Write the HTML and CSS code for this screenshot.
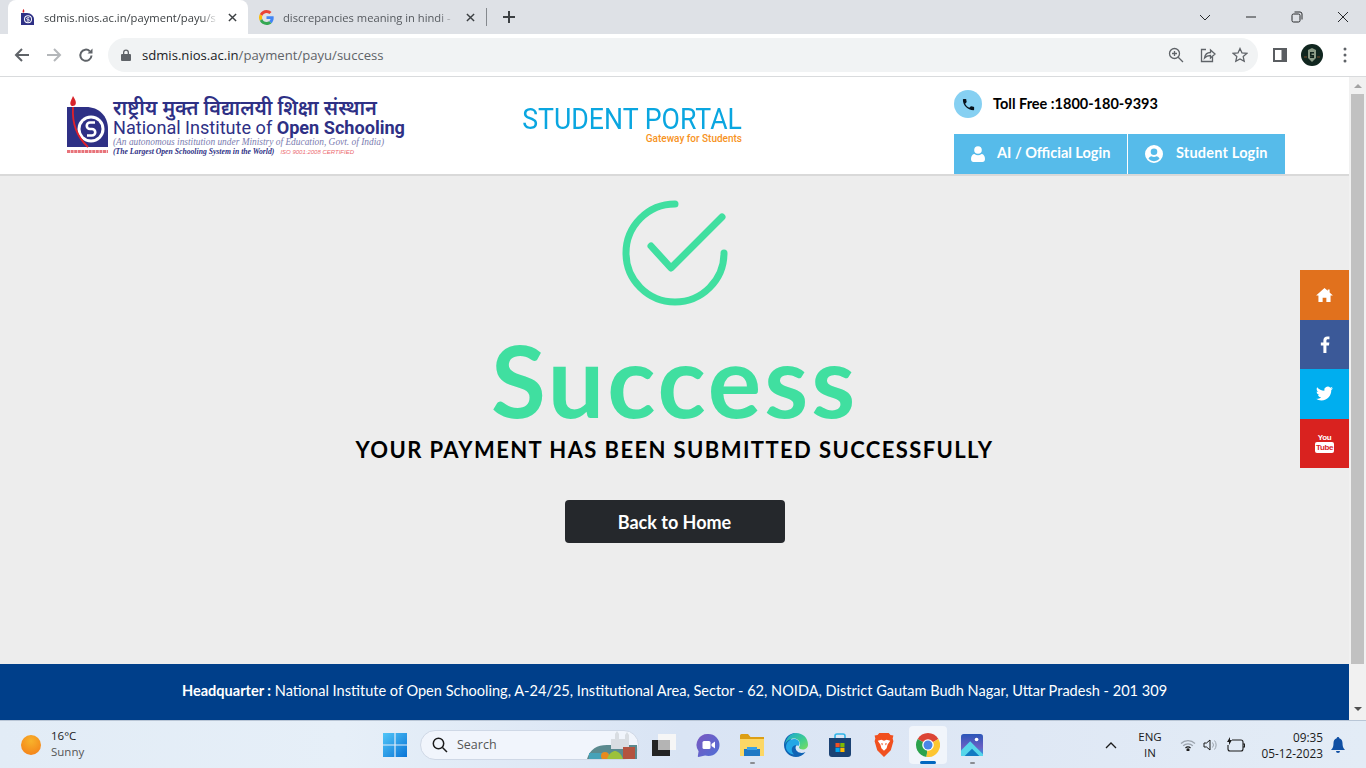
FILE: index.html
```html
<!DOCTYPE html>
<html lang="en">
  <head>
    <meta charset="UTF-8" />
    <meta name="viewport" content="width=device-width, initial-scale=1.0" />
    <title>Payment success</title>
    <link rel="stylesheet" href="styles.css">
  </head>
  <body>
    <!-- browser tabs -->
    <div class="tabstrip">
      <div class="tab tab-active">
        <svg class="favicon" viewBox="0 0 13 16"><path fill="#d8232a" d="M2.500 0c.8 1 1 2 .6 3.500H1.800C1.300 2.500 1.800 1 2.500 0z"/><path fill="#2e3085" d="M0 4h6c4 0 7 3 7 6.500V16H0z"/><circle cx="7" cy="10.300" r="4" fill="#fff"/><circle cx="7" cy="10.300" r="3" fill="#2e3085"/><path fill="none" stroke="#fff" stroke-width="1" d="M8.300 8.800H6.500a.8.8 0 0 0 0 1.600h1a.8.8 0 0 1 0 1.600H5.700"/></svg>
        <span class="tab-title">sdmis.nios.ac.in/payment/payu/s</span>
        <svg class="tab-close" viewBox="0 0 10 10"><path d="M1 1l8 8M9 1L1 9"/></svg>
      </div>
      <div class="tab">
        <svg class="favicon favicon-g" viewBox="0 0 48 48"><path fill="#EA4335" d="M24 9.500c3.540 0 6.710 1.220 9.210 3.600l6.850-6.850C35.900 2.380 30.470 0 24 0 14.620 0 6.510 5.380 2.560 13.220l7.980 6.190C12.430 13.720 17.740 9.500 24 9.500z"/><path fill="#4285F4" d="M46.980 24.550c0-1.570-.15-3.090-.38-4.550H24v9.020h12.940c-.58 2.960-2.260 5.480-4.780 7.180l7.730 6c4.510-4.180 7.090-10.360 7.090-17.650z"/><path fill="#FBBC05" d="M10.530 28.590c-.48-1.450-.76-2.990-.76-4.590s.27-3.140.76-4.590l-7.980-6.190C.92 16.460 0 20.120 0 24c0 3.880.92 7.540 2.560 10.780l7.970-6.190z"/><path fill="#34A853" d="M24 48c6.480 0 11.930-2.130 15.890-5.810l-7.730-6c-2.150 1.450-4.920 2.300-8.160 2.300-6.260 0-11.570-4.220-13.470-9.910l-7.980 6.190C6.510 42.620 14.620 48 24 48z"/></svg>
        <span class="tab-title tab-title-dim">discrepancies meaning in hindi -</span>
        <svg class="tab-close" viewBox="0 0 10 10"><path d="M1 1l8 8M9 1L1 9"/></svg>
      </div>
      <span class="tab-sep"></span>
      <svg class="new-tab" viewBox="0 0 12 12"><path d="M6 0v12M0 6h12"/></svg>
      <div class="window-btns">
        <svg viewBox="0 0 12 12"><path d="M1 4l5 5 5-5"/></svg>
        <svg viewBox="0 0 12 12"><path d="M1 6h10"/></svg>
        <svg viewBox="0 0 12 12"><rect x="1" y="3" width="8" height="8" rx="1.500"/><path d="M3.500 1h5.500a2 2 0 0 1 2 2v5.500"/></svg>
        <svg viewBox="0 0 12 12"><path d="M1 1l10 10M11 1L1 11"/></svg>
      </div>
    </div>

    <!-- address bar -->
    <div class="toolbar">
      <svg class="nav-icon" viewBox="0 0 16 16"><path d="M15 8H2M8 2L2 8l6 6"/></svg>
      <svg class="nav-icon nav-off" viewBox="0 0 16 16"><path d="M1 8h13M8 2l6 6-6 6"/></svg>
      <svg class="nav-icon" viewBox="0 0 16 16"><path d="M13.500 8.500a5.600 5.600 0 1 1-1.700-4.300"/><path class="solid" d="M14.500 1.500v5h-5z"/></svg>
      <div class="omnibox">
        <svg class="lock" viewBox="0 0 10 12"><path d="M2 5V3.500a3 3 0 0 1 6 0V5h1a1 1 0 0 1 1 1v5a1 1 0 0 1-1 1H1a1 1 0 0 1-1-1V6a1 1 0 0 1 1-1zm1.300 0h3.400V3.500a1.700 1.700 0 0 0-3.400 0z"/></svg>
        <span class="url"><b>sdmis.nios.ac.in</b>/payment/payu/success</span>
        <div class="omni-actions">
          <svg viewBox="0 0 16 16"><circle cx="6.500" cy="6.500" r="5"/><path d="M10.200 10.200L15 15M6.500 4v5M4 6.500h5"/></svg>
          <svg viewBox="0 0 16 16"><path d="M6 2.500H1.500v12h11V10"/><path d="M4.500 11c.5-3.500 3-5.500 6-5.500V3l4.500 4-4.500 4V8.500c-2.500 0-4.500.8-6 2.500z"/></svg>
          <svg viewBox="0 0 16 16"><path d="M8 1.500l2 4.400 4.800.5-3.600 3.200 1 4.700L8 11.900l-4.200 2.400 1-4.700L1.200 6.400 6 5.900z"/></svg>
        </div>
      </div>
      <svg class="side-panel" viewBox="0 0 14 14"><path d="M0 0h14v14H0zM2 2v10h6.500V2z"/></svg>
      <svg class="avatar" viewBox="0 0 22 22"><circle cx="11" cy="11" r="11" fill="#10261f"/><path d="M7 6l4-2 4 2v8l-4 4-4-4z" fill="#8a9a86"/><path d="M9 8h4v1.500h-2.500V11H13v3H9v-1.500h2.500V12.300H9z" fill="#11241d"/><path d="M3 13h3M16 13h3" stroke="#7a4a2a" stroke-width="1"/></svg>
      <svg class="kebab" viewBox="0 0 4 16"><circle cx="2" cy="2" r="1.500"/><circle cx="2" cy="8" r="1.500"/><circle cx="2" cy="14" r="1.500"/></svg>
    </div>

    <div class="viewport">
      <div class="page">
        <header class="site-header">
          <div class="logo">
            <svg class="logo-mark" viewBox="0 0 41 59">
              <path fill="#d8232a" d="M6 0c1.500 3 3.500 5 2.700 8-.5 2-4.200 3-5.200.5C2.700 6 5 3 6 0z"/>
              <path fill="#2e3085" d="M0 11h19c13 0 22 9 22 22v18H0z"/>
              <circle cx="24" cy="33" r="13.500" fill="#fff"/>
              <circle cx="24" cy="33" r="10.500" fill="#2e3085"/>
              <path fill="none" stroke="#fff" stroke-width="2.600" d="M28 26.500h-5a3 3 0 0 0 0 6.500h2a3 3 0 0 1 0 6.500h-5"/>
              <path fill="none" stroke="#e0202a" stroke-width="1.800" d="M6 11c-1 15 3 29 15 40"/>
              <path fill="none" stroke="#e8737a" stroke-width="3" stroke-dasharray="3 .6" d="M0 55.500h41"/>
            </svg>
            <div class="logo-text">
              <div class="logo-hi">राष्ट्रीय मुक्त विद्यालयी शिक्षा संस्थान</div>
              <div class="logo-en">National Institute of <b>Open Schooling</b></div>
              <div class="logo-sub">(An autonomous institution under Ministry of Education, Govt. of India)</div>
              <div class="logo-tag"><b>(The Largest Open Schooling System in the World)</b><span class="logo-iso">ISO 9001:2008 CERTIFIED</span></div>
            </div>
          </div>
          <div class="portal">
            <div class="portal-title">STUDENT PORTAL</div>
            <div class="portal-sub">Gateway for Students</div>
          </div>
          <div class="header-right">
            <div class="toll">
              <span class="toll-icon"><svg viewBox="0 0 24 24"><path d="M6.620 10.790c1.440 2.830 3.760 5.140 6.590 6.590l2.200-2.200c.27-.27.670-.36 1.020-.24 1.120.37 2.330.57 3.570.57.550 0 1 .45 1 1V20c0 .55-.45 1-1 1-9.390 0-17-7.610-17-17 0-.55.45-1 1-1h3.500c.55 0 1 .45 1 1 0 1.250.2 2.450.57 3.570.11.35.03.74-.25 1.020l-2.200 2.200z"/></svg></span>
              <span class="toll-text">Toll Free :1800-180-9393</span>
            </div>
            <div class="login-btns">
              <a class="login login-ai">
                <svg class="login-user" viewBox="0 0 14 16"><circle cx="7" cy="4" r="3.800"/><path d="M0 13c0-3 1.500-5 3.500-5 1 .8 2.200 1.200 3.500 1.200S9.500 8.800 10.500 8c2 0 3.500 2 3.500 5 0 2-1 3-2.500 3h-9C1 16 0 15 0 13z"/></svg>
                AI / Official Login
              </a>
              <a class="login login-student">
                <svg class="login-circle" viewBox="0 0 18 18"><path fill-rule="evenodd" d="M9 0a9 9 0 1 1 0 18A9 9 0 0 1 9 0zm0 3.500a3.300 3.300 0 1 0 0 6.600 3.300 3.300 0 0 0 0-6.600zM3.500 13.800A7 7 0 0 0 9 16.200a7 7 0 0 0 5.500-2.400c-.5-1.500-1.700-2.500-3-2.500-.8.400-1.600.6-2.500.6s-1.700-.2-2.500-.6c-1.300 0-2.500 1-3 2.500z"/></svg>
                Student Login
              </a>
            </div>
          </div>
        </header>

        <main class="success">
          <svg class="check" viewBox="0 0 106 106"><path d="M53 4A49 49 0 1 0 102 53"/><path d="M29 46l20 22 51-51"/></svg>
          <h1 class="success-title">Success</h1>
          <p class="success-msg">YOUR PAYMENT HAS BEEN SUBMITTED SUCCESSFULLY</p>
          <a class="home-btn">Back to Home</a>
        </main>

        <footer class="site-footer"><b>Headquarter :</b> National Institute of Open Schooling, A-24/25, Institutional Area, Sector - 62, NOIDA, District Gautam Budh Nagar, Uttar Pradesh - 201 309</footer>

        <!-- floating social bar -->
        <div class="social">
          <a class="social-home"><svg viewBox="0 0 18 15"><path d="M9 0l3.500 3V1.500h2v3.300L18 8h-2.500v7H11v-4.500H7V15H2.500V8H0z"/></svg></a>
          <a class="social-fb"><svg viewBox="0 0 10 18"><path d="M6.500 18V10h2.700l.4-3.200H6.500V4.900c0-.9.300-1.500 1.600-1.500h1.600V.6C9.400.5 8.500.4 7.400.4 5 .4 3.300 1.900 3.300 4.500v2.300H.6V10h2.700v8z"/></svg></a>
          <a class="social-tw"><svg viewBox="0 0 24 24"><path d="M23.953 4.570a10 10 0 01-2.825.775 4.958 4.958 0 002.163-2.723c-.951.555-2.005.959-3.127 1.184a4.920 4.920 0 00-8.384 4.482C7.690 8.095 4.067 6.130 1.640 3.162a4.822 4.822 0 00-.666 2.475c0 1.710.870 3.213 2.188 4.096a4.904 4.904 0 01-2.228-.616v.060a4.923 4.923 0 003.946 4.827 4.996 4.996 0 01-2.212.085 4.936 4.936 0 004.604 3.417 9.867 9.867 0 01-6.102 2.105c-.39 0-.779-.023-1.170-.067a13.995 13.995 0 007.557 2.209c9.053 0 13.998-7.496 13.998-13.985 0-.21 0-.42-.015-.63A9.935 9.935 0 0024 4.590z"/></svg></a>
          <a class="social-yt"><span class="yt-you">You</span><span class="yt-tube">Tube</span></a>
        </div>
      </div>

      <div class="scrollbar">
        <span class="arrow-up"></span>
        <span class="thumb"></span>
        <span class="arrow-down"></span>
      </div>
    </div>

    <!-- windows taskbar -->
    <div class="taskbar">
      <div class="weather">
        <span class="sun"></span>
        <div class="weather-text">
          <div>16°C</div>
          <div class="weather-dim">Sunny</div>
        </div>
      </div>
      <div class="task-cell">
        <svg class="task-icon" viewBox="0 0 24 24"><defs><linearGradient id="win" x1="0" y1="0" x2="1" y2="1"><stop offset="0" stop-color="#52c6f8"/><stop offset="1" stop-color="#0a74d6"/></linearGradient></defs><path fill="url(#win)" d="M0 0h11.400v11.400H0zM12.600 0H24v11.400H12.600zM0 12.600h11.400V24H0zM12.600 12.600H24V24H12.600z"/></svg>
      </div>
      <div class="searchbox">
        <svg class="search-icon" viewBox="0 0 16 16"><circle cx="6.500" cy="6.500" r="5.200"/><path d="M10.500 10.500L15 15"/></svg>
        <span>Search</span>
        <svg class="search-art" viewBox="0 0 50 28"><path fill="#5b8a8f" d="M0 28C3 18 10 14 20 14l30 0v14z"/><path fill="#46a2b8" d="M2 22h20v6H2z"/><path fill="#d9dde2" d="M24 8h4V3l2-3 2 3v5h6V4l2-3 2 3v14H24z"/><path fill="#b4533f" d="M36 16h12v12H36z"/><circle cx="18" cy="25" r="4" fill="#e88a1f"/><path fill="#9cc13b" d="M20 28c2-6 6-8 8-8s6 2 8 8z"/></svg>
      </div>
      <div class="task-cell task-view">
        <svg class="task-icon" viewBox="0 0 24 22"><rect x="6" width="18" height="16" fill="#f6f6f6"/><rect y="6" width="18" height="16" fill="#242424"/><rect x="6" y="6" width="12" height="10" fill="#b4b4b4"/></svg>
      </div>
      <div class="task-cell">
        <svg class="task-icon" viewBox="0 0 24 24"><defs><linearGradient id="teams" x1="0" y1="0" x2="1" y2="1"><stop offset="0" stop-color="#7a58c0"/><stop offset="1" stop-color="#4f6fd6"/></linearGradient></defs><path fill="url(#teams)" d="M12.500 1a11 11 0 0 1 0 22c-1.200 0-2.300-.2-3.400-.5L2.500 24c-.5 0-.8-.4-.7-.8l.8-4.900A11 11 0 0 1 12.500 1z"/><rect x="6.500" y="8" width="8" height="8" rx="1.500" fill="#fff"/><path fill="#fff" d="M15.500 11l3.500-2.500v7L15.500 13z"/></svg>
      </div>
      <div class="task-cell task-open">
        <svg class="task-icon" viewBox="0 0 24 22"><path fill="#dd9f15" d="M0 1.500A1.500 1.500 0 0 1 1.500 0H8l2.500 3H24v5H0z"/><path fill="#fcd765" d="M0 5h24v17H0z"/><path fill="#1e78c4" d="M4 15h16v7H4z"/><path fill="#37a0e6" d="M7 13h10v3H7z"/></svg>
      </div>
      <div class="task-cell">
        <svg class="task-icon" viewBox="0 0 24 24"><defs><linearGradient id="edge" x1="0" y1="0" x2="1" y2="1"><stop offset="0" stop-color="#1aa4d8"/><stop offset=".6" stop-color="#41cf8e"/><stop offset="1" stop-color="#7fdc5e"/></linearGradient></defs><path fill="#0f63b4" d="M12 0C5 0 0 5.500 0 12c0 6.600 5.400 12 12 12 3.500 0 7-1.500 9.500-5-3 1.500-6 1.200-8-.5-2.500-2.200-2.500-5-.5-6.500H6C6 6 9 1 12 0z"/><path fill="#24a7e6" d="M2 14c0-5 4-8 8-8 3 0 5.500 2 5.500 4.500 0 1-.5 1.500-1 2.500-1.500-1-4-1-5.500.5C7 15.500 7.500 19 10 21.500 5.500 21 2 18 2 14z"/><path fill="url(#edge)" d="M12 0c7 0 12 5 12 11.500 0 3.500-2.500 5-5 5-2 0-4-1-4-2 0-1 1-1.500 1-3.500 0-3-2.500-5.500-6-5.500C6 5.500 2.500 8 1 11.500 2 5 6.500 0 12 0z"/></svg>
      </div>
      <div class="task-cell">
        <svg class="task-icon" viewBox="0 0 24 24"><path fill="none" stroke="#31b5e8" stroke-width="1.600" d="M7 7V3a2 2 0 0 1 2-2h6a2 2 0 0 1 2 2v4"/><path fill="#1b4273" d="M1 5h22v16a3 3 0 0 1-3 3H4a3 3 0 0 1-3-3z"/><path fill="#f25022" d="M7.500 10h4.200v4.200H7.500z"/><path fill="#7fba00" d="M12.300 10h4.200v4.200h-4.200z"/><path fill="#00a4ef" d="M7.500 14.800h4.200V19H7.500z"/><path fill="#ffb900" d="M12.300 14.800h4.200V19h-4.200z"/></svg>
      </div>
      <div class="task-cell">
        <svg class="task-icon" viewBox="0 0 20 23"><path fill="#f1501f" d="M5.500 0h9l1.700 2 2.800.4-.7 2.800.7 2.800-2.500 8.500L10 23l-6.500-6.500L1 8l.7-2.800L1 2.400 3.800 2z"/><path fill="#fff" d="M4 7.500l3.500-1L10 7.500l2.500-1 3.500 1-2.500 3.500-1 3.500L10 17l-2.500-2.500-1-3.500z"/><path fill="#f1501f" d="M7.300 9.500l1.800.8-1 1.700zM12.700 9.500l-1.800.8 1 1.700z"/></svg>
      </div>
      <div class="task-cell task-active">
        <svg class="task-icon" viewBox="0 0 24 24"><path fill="#dc4535" d="M12 12L22.390 6A12 12 0 0 0 1.610 6z"/><path fill="#2ba24c" d="M12 12L1.610 6A12 12 0 0 0 10.500 23.900z"/><path fill="#fdc632" d="M12 12L10.500 23.900A12 12 0 0 0 22.390 6z"/><circle cx="12" cy="12" r="5.800" fill="#fff"/><circle cx="12" cy="12" r="4.500" fill="#4a86e8"/></svg>
      </div>
      <div class="task-cell task-open">
        <svg class="task-icon task-photos" viewBox="0 0 24 24"><defs><linearGradient id="ph" x1="0" y1="0" x2="0" y2="1"><stop offset="0" stop-color="#2b56b8"/><stop offset=".6" stop-color="#6a5fc4"/><stop offset="1" stop-color="#2a9fe6"/></linearGradient></defs><rect width="24" height="24" rx="3" fill="url(#ph)"/><circle cx="17" cy="6" r="2" fill="#fff"/><path fill="#56d6ea" d="M0 24V18L10 8l14 14v2z"/><path fill="#137ac2" d="M4 24l8-8 8 8z"/></svg>
      </div>
      <div class="tray">
        <svg class="tray-chevron" viewBox="0 0 12 8"><path d="M1 7l5-5 5 5"/></svg>
        <div class="lang"><div>ENG</div><div>IN</div></div>
        <svg class="tray-wifi" viewBox="0 0 16 12"><path class="faint" d="M1 4.500a10 10 0 0 1 14 0M3.200 6.800a7 7 0 0 1 9.600 0"/><path d="M5.500 9a3.500 3.500 0 0 1 5 0"/><circle cx="8" cy="10.800" r="1"/></svg>
        <svg class="tray-vol" viewBox="0 0 16 14"><path d="M1 5h2.500L7 2v10L3.500 9H1z"/><path class="faint" d="M9.500 4.500a4 4 0 0 1 0 5M11.500 2.500a7 7 0 0 1 0 9"/></svg>
        <svg class="tray-batt" viewBox="0 0 20 16"><path d="M7 3h9a2 2 0 0 1 2 2v7a2 2 0 0 1-2 2H5a2 2 0 0 1-2-2V8M18 7h1.500v3H18"/><path class="solid" d="M5 0L2 5h2v3l3-5H5z"/></svg>
        <div class="clock"><div>09:35</div><div>05-12-2023</div></div>
        <svg class="tray-bell" viewBox="0 0 14 16"><path d="M7 0a1.300 1.300 0 0 1 1.300 1.300C10.500 2 11.500 3.800 11.500 6c0 3 .5 5 2.500 7H0c2-2 2.500-4 2.500-7 0-2.200 1-4 3.200-4.700A1.300 1.300 0 0 1 7 0zM5 14h4a2 2 0 0 1-4 0z"/></svg>
      </div>
    </div>
  </body>
</html>
```

FILE: styles.css
```css
/* general */
* {
  box-sizing: border-box;
}

html,
body {
  margin: 0;
  height: 768px;
  overflow: hidden;
}

body {
  display: flex;
  flex-direction: column;
  font-family: "Lato", "Noto Sans", sans-serif;
  color: #000;
  background-color: #ededed;
}

/* tabs */
.tabstrip {
  display: flex;
  align-items: center;
  height: 34px;
  padding-left: 8px;
  background-color: #dee1e6;
  font-family: "Open Sans", sans-serif;
  font-size: 11.200px;
  color: #3c4043;
}

.tab {
  display: flex;
  align-items: center;
  width: 238px;
  height: 34px;
  padding: 0 11px 0 13px;
}

.tab-active {
  width: 240px;
  background-color: #fff;
  border-radius: 8px 8px 0 0;
}

.favicon {
  flex: none;
  width: 13px;
  height: 16px;
  margin-right: 10px;
}

.favicon-g {
  width: 15px;
  height: 15px;
  margin-left: -2px;
  margin-right: 9px;
}

.tab-title {
  flex: 1;
  overflow: hidden;
  white-space: nowrap;
  -webkit-mask-image: linear-gradient(to right, #000 90%, transparent 100%);
  mask-image: linear-gradient(to right, #000 90%, transparent 100%);
}

.tab-title-dim {
  color: #55595e;
}

.tab-close {
  flex: none;
  width: 9px;
  height: 9px;
  margin-left: 10px;
  fill: none;
  stroke: #3c4043;
  stroke-width: 1.600;
}

.tab-sep {
  width: 1px;
  height: 18px;
  background-color: #85898e;
}

.new-tab {
  width: 12px;
  height: 12px;
  margin-left: 16px;
  fill: none;
  stroke: #3c4043;
  stroke-width: 2;
}

.window-btns {
  display: flex;
  gap: 34px;
  margin-left: auto;
  padding-right: 17px;
}

.window-btns svg {
  width: 12px;
  height: 12px;
  fill: none;
  stroke: #26282b;
  stroke-width: 1;
}

/* address bar */
.toolbar {
  display: flex;
  align-items: center;
  height: 43px;
  padding: 0 0 1px 14px;
  background-color: #fff;
  border-bottom: 1px solid #d9dbdd;
}

.nav-icon {
  width: 16px;
  height: 16px;
  margin-right: 16px;
  fill: none;
  stroke: #5f6368;
  stroke-width: 2;
}

.nav-icon .solid {
  fill: #5f6368;
  stroke: none;
}

.nav-off {
  stroke: #b4b7ba;
}

.omnibox {
  display: flex;
  align-items: center;
  width: 1150px;
  height: 34px;
  margin-left: -2px;
  padding: 0 10px 0 13px;
  background-color: #f1f3f4;
  border-radius: 17px;
  font-family: "Open Sans", sans-serif;
  font-size: 13.100px;
  color: #5f6368;
}

.lock {
  width: 10px;
  height: 12px;
  margin-right: 11px;
  fill: #5f6368;
}

.url b {
  font-weight: 400;
  color: #202124;
}

.omni-actions {
  display: flex;
  gap: 16px;
  margin-left: auto;
}

.omni-actions svg {
  width: 16px;
  height: 16px;
  fill: none;
  stroke: #5f6368;
  stroke-width: 1.300;
}

.side-panel {
  width: 14px;
  height: 14px;
  margin-left: 15px;
  fill: #5a5d61;
  fill-rule: evenodd;
}

.avatar {
  width: 22px;
  height: 22px;
  margin-left: 14px;
}

.kebab {
  width: 4px;
  height: 16px;
  margin-left: 20px;
  fill: #5f6368;
}

/* page + scrollbar */
.viewport {
  display: flex;
  height: 643px;
}

.page {
  position: relative;
  display: flex;
  flex-direction: column;
  width: 1349px;
}

.scrollbar {
  position: relative;
  display: flex;
  flex-direction: column;
  align-items: center;
  width: 17px;
  background-color: #f1f1f1;
}

.thumb {
  width: 13px;
  height: 570px;
  margin-top: 6px;
  background-color: #c1c1c1;
}

.arrow-up,
.arrow-down {
  width: 0;
  height: 0;
  border-left: 4px solid transparent;
  border-right: 4px solid transparent;
}

.arrow-up {
  margin-top: 7px;
  border-bottom: 4px solid #a3a3a3;
}

.arrow-down {
  margin-top: 43px;
  border-top: 4px solid #505050;
}

/* site header */
.site-header {
  display: flex;
  flex: none;
  height: 99px;
  padding-left: 67px;
  background-color: #fff;
  border-bottom: 2px solid #d9d9d9;
}

.logo {
  display: flex;
  width: 338px;
  padding-top: 19px;
  color: #2e3085;
  font-family: "Roboto", sans-serif;
}

.logo-mark {
  flex: none;
  width: 41px;
  height: 59px;
  margin-right: 5px;
}

.logo-hi {
  height: 23px;
  font-family: "Noto Sans", "Noto Serif", sans-serif;
  font-size: 20px;
  line-height: 23px;
  font-weight: 600;
  white-space: nowrap;
}

.logo-en {
  height: 18px;
  font-size: 18.100px;
  line-height: 18px;
  white-space: nowrap;
}

.logo-sub {
  height: 10px;
  font-family: "Liberation Serif", serif;
  font-size: 9.400px;
  line-height: 10px;
  font-style: italic;
  color: #7b7db0;
  white-space: nowrap;
}

.logo-tag {
  height: 9px;
  font-family: "Liberation Serif", serif;
  font-size: 7.700px;
  line-height: 9px;
  font-style: italic;
  white-space: nowrap;
}

.logo-iso {
  margin-left: 6px;
  font-family: "Liberation Sans", sans-serif;
  font-size: 6px;
  color: #ec6b70;
}

.portal {
  display: flex;
  flex-direction: column;
  align-items: flex-end;
  width: 220px;
  margin-left: 117px;
  padding-top: 24px;
  font-family: "Roboto", sans-serif;
}

.portal-title {
  font-size: 30px;
  line-height: 36px;
  color: #0aa6e0;
  white-space: nowrap;
  transform: scaleX(.89);
  transform-origin: right center;
}

.portal-sub {
  margin-top: -5px;
  font-size: 10px;
  line-height: 13px;
  font-weight: 500;
  color: #f7931e;
}

.header-right {
  display: flex;
  flex-direction: column;
  width: 331px;
  margin-left: 212px;
  padding-top: 13px;
}

.toll {
  display: flex;
  align-items: center;
  gap: 11px;
  height: 28px;
  font-size: 14.500px;
  font-weight: 700;
}

.toll-text {
  padding-bottom: 2px;
}

.toll-icon {
  display: flex;
  align-items: center;
  justify-content: center;
  width: 28px;
  height: 28px;
  background-color: #86d0f2;
  border-radius: 50%;
}

.toll-icon svg {
  width: 15px;
  height: 15px;
  fill: #06101a;
}

.login-btns {
  display: flex;
  gap: 1px;
  margin-top: 16px;
}

.login {
  display: flex;
  align-items: center;
  height: 40px;
  padding-bottom: 3px;
  background-color: #56bbea;
  color: #fff;
  font-size: 14.500px;
  font-weight: 700;
}

.login svg {
  margin-top: 3px;
}

.login-ai {
  width: 173px;
  padding-left: 17px;
  gap: 12px;
}

.login-student {
  width: 157px;
  padding-left: 17px;
  gap: 13px;
  letter-spacing: .2px;
}

.login-user {
  width: 14px;
  height: 16px;
  fill: #fff;
}

.login-circle {
  width: 18px;
  height: 18px;
  fill: #fff;
}

/* success block */
.success {
  display: flex;
  flex: 1;
  flex-direction: column;
  align-items: center;
  padding-top: 24px;
  background-color: #ededed;
}

.check {
  width: 106px;
  height: 106px;
  fill: none;
  stroke: #40dfa0;
  stroke-width: 7;
  stroke-linecap: round;
  stroke-linejoin: round;
}

.success-title {
  margin: 17px 0 0;
  font-size: 100px;
  line-height: 112px;
  font-weight: 700;
  letter-spacing: 3px;
  color: #40dfa0;
}

.success-msg {
  margin: -1px 0 0;
  font-size: 22px;
  line-height: 32px;
  font-weight: 700;
  letter-spacing: 1.400px;
}

.home-btn {
  display: flex;
  align-items: center;
  justify-content: center;
  width: 220px;
  height: 43px;
  margin-top: 34px;
  background-color: #25282c;
  border-radius: 4px;
  color: #fff;
  font-size: 18px;
  font-weight: 700;
}

/* footer */
.site-footer {
  flex: none;
  height: 56px;
  background-color: #003f8a;
  color: #fff;
  font-size: 14.550px;
  line-height: 53px;
  text-align: center;
}

/* social bar */
.social {
  position: absolute;
  top: 193px;
  right: 0;
  display: flex;
  flex-direction: column;
  width: 49px;
}

.social a {
  display: flex;
  flex-direction: column;
  align-items: center;
  justify-content: center;
  height: 49.500px;
}

.social svg {
  fill: #fff;
}

.social-home {
  background-color: #e1711d;
}

.social-home svg {
  width: 17px;
  height: 14px;
}

.social-fb {
  background-color: #3b5998;
}

.social-fb svg {
  width: 10px;
  height: 17px;
}

.social-tw {
  background-color: #00aeef;
}

.social-tw svg {
  width: 17px;
  height: 17px;
}

.social-yt {
  background-color: #d9221f;
  font-family: "Liberation Sans", sans-serif;
  font-weight: 700;
}

.yt-you {
  font-size: 8px;
  line-height: 9px;
  letter-spacing: -.4px;
  color: #fff;
}

.yt-tube {
  padding: 0 1px;
  background-color: #fff;
  border-radius: 2px;
  color: #d9221f;
  font-size: 8px;
  line-height: 11px;
  letter-spacing: -.4px;
}

/* taskbar */
.taskbar {
  display: flex;
  align-items: center;
  height: 48px;
  background: linear-gradient(90deg, #e2ecf6 0%, #e6eff8 25%, #d9e4f4 50%, #dfe8f5 75%, #e3ecf6 100%);
  border-top: 1px solid #b9c6d6;
  font-family: "Open Sans", sans-serif;
  font-size: 11.500px;
  color: #1b1b1b;
}

.weather {
  display: flex;
  align-items: center;
  gap: 10px;
  width: 373px;
  padding-left: 21px;
}

.sun {
  width: 20px;
  height: 20px;
  background: radial-gradient(circle at 50% 30%, #f7b32b, #f47a16);
  border-radius: 50%;
}

.weather-text {
  padding-bottom: 1px;
  line-height: 16px;
}

.weather-dim {
  color: #555;
}

.task-cell {
  position: relative;
  display: flex;
  flex: none;
  align-items: center;
  justify-content: center;
  width: 44px;
  height: 44px;
  border-radius: 4px;
}

.task-icon {
  width: 24px;
  height: 24px;
}

.task-view {
  width: 50px;
  margin-right: -3px;
}

.task-view .task-icon,
.task-open .task-icon {
  height: 22px;
}

.task-active {
  width: 38px;
  height: 38px;
  margin: 0 3px;
  background-color: #f1f5fb;
}

.task-active::after,
.task-open::after {
  content: "";
  position: absolute;
  bottom: 3px;
  left: 50%;
  width: 5px;
  height: 2px;
  margin-left: -2px;
  background-color: #8a8d92;
  border-radius: 2px;
}

.task-active::after {
  bottom: 0;
  width: 16px;
  height: 3px;
  margin-left: -8px;
  background-color: #0067c0;
}

.searchbox {
  display: flex;
  flex: none;
  align-items: center;
  width: 219px;
  height: 30px;
  margin-left: 3px;
  padding: 0 1px 0 11px;
  background-color: #f1f5fc;
  border: 1px solid #cfd8e6;
  border-radius: 15px;
  font-size: 12.500px;
  color: #555;
}

.search-icon {
  width: 16px;
  height: 16px;
  margin-right: 9px;
  fill: none;
  stroke: #1b1b1b;
  stroke-width: 1.500;
}

.search-art {
  width: 50px;
  height: 28px;
  margin-left: auto;
}

.tray {
  display: flex;
  align-items: center;
  margin-left: 111px;
}

.tray svg {
  fill: none;
  stroke: #1b1b1b;
}

.tray-chevron {
  width: 12px;
  height: 8px;
  stroke-width: 1.300;
}

.lang {
  width: 40px;
  margin-left: 13px;
  line-height: 16px;
  text-align: center;
}

.tray-wifi {
  width: 16px;
  height: 12px;
  margin-left: 10px;
  stroke-width: 1.200;
}

.tray-wifi circle {
  fill: #1b1b1b;
}

.tray .faint {
  stroke: #9ba3ad;
}

.tray-vol {
  width: 16px;
  height: 14px;
  margin-left: 7px;
}

.tray-batt {
  width: 20px;
  height: 16px;
  margin-left: 6px;
  stroke-width: 1.100;
}

.tray-batt .solid {
  fill: #1b1b1b;
  stroke: none;
}

.clock {
  width: 78px;
  font-size: 11.800px;
  line-height: 16px;
  text-align: right;
}

.tray .tray-bell {
  width: 14px;
  height: 16px;
  margin-left: 8px;
  fill: #0f4fa3;
  stroke: none;
}
```
